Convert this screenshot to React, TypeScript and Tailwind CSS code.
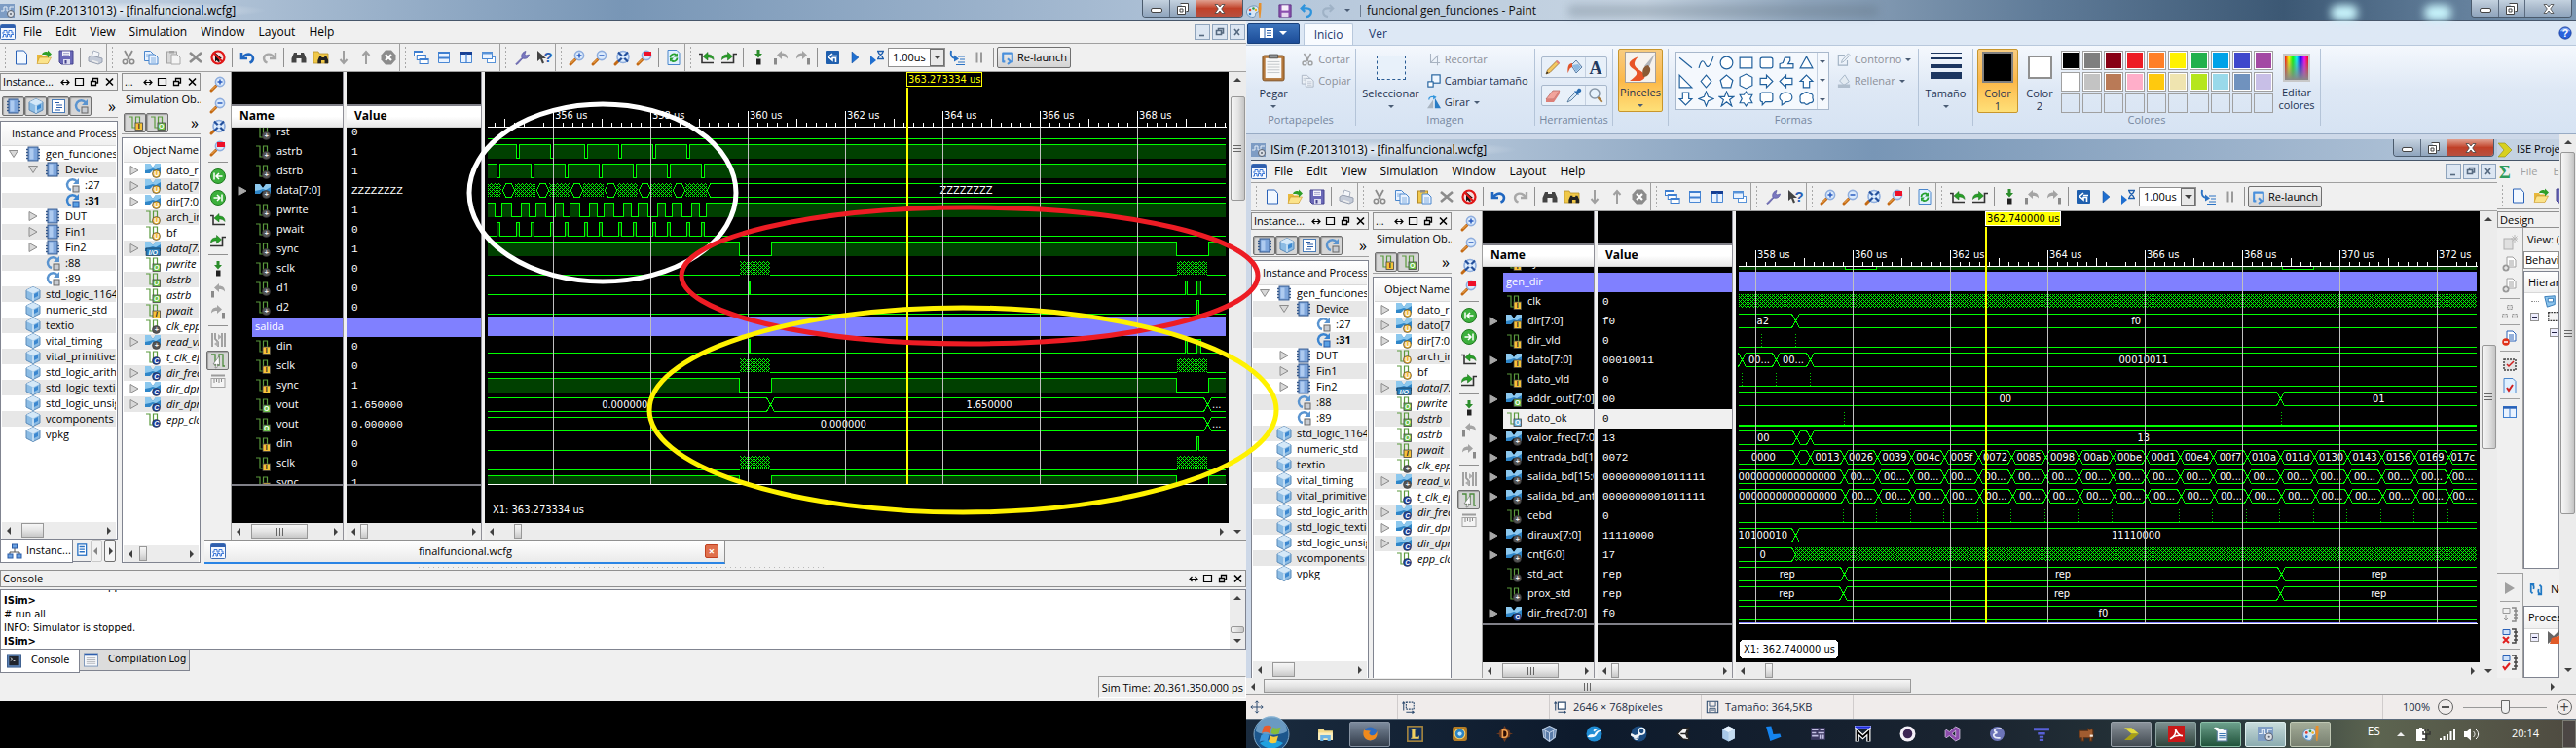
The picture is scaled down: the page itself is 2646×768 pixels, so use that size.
import React from "react";

/* ------------------------------------------------------------------ */
/* Icons, all drawn on a 16 x 16 grid                                  */
/* ------------------------------------------------------------------ */

const lens = (
  <>
    <path d="M1 15l5-5" stroke="#c46a14" strokeWidth="3" strokeLinecap="round" />
    <path d="M1.5 14l4-4" stroke="#f2b25c" strokeWidth="1" />
    <circle cx="10" cy="6" r="4.6" fill="#dcebfc" stroke="#8faede" strokeWidth="1.6" />
  </>
);
const bus = (
  <>
    <path d="M0 1h5l3 4 3-4h5v10h-5l-3-3-3 3H0z" fill="#2f86c8" />
    <path d="M0 1h5l3 4 3-4h5v3l-5 3-3-1-3 1-5 1z" fill="#8cc8ee" />
  </>
);
const sig = <path d="M1 2h4v11h4M8.500 13V2h4v6" fill="none" stroke="#5a9a3c" strokeWidth="1.200" />;
const badge = (c: string, t: string, round = false, fg = "#222") => (
  <>
    {round ? (
      <circle cx="11.500" cy="11.500" r="4" fill={c} stroke="#333" strokeWidth=".6" />
    ) : (
      <rect x="8" y="8" width="7.500" height="7.500" fill={c} stroke="#444" strokeWidth=".8" />
    )}
    <text x="11.700" y="14.300" fontSize="7" fontWeight="bold" textAnchor="middle" fill={fg} fontFamily="Liberation Sans, sans-serif">
      {t}
    </text>
  </>
);
const U = badge("#f0b93c", "U", true, "#fff");
const I = badge("#f6c33a", "I");
const O = badge("#6cc04a", "O", false, "#fff");
const P = badge("#555", "+", true, "#eee");
const C = badge("#1c3f9a", "C", true, "#fff");
const doc = (x: number, y: number, c: string, f = "#fff") => (
  <path d={`M${x} ${y}h6l3 3v7h-9z`} fill={f} stroke={c} />
);
const binoc = (c: string) => (
  <path d="M3 3h3v2h4V3h3l2.500 6v4.500h-5V9h-5v4.500h-5V9z" fill={c} />
);

const ICONS: Record<string, React.ReactNode> = {
  wcfg: (
    <>
      <rect x=".5" y=".5" width="15" height="15" rx="1" fill="#f4f8ff" stroke="#3c6cb4" />
      <rect x="1" y="1" width="14" height="3" fill="#2f5fae" />
      <path d="M2 9h2V6.500h3V9h2V6.500h3V9h2M2 13h1.500v-2.500H6V13h1.500v-2.500H10V13h1.500v-2.500H14" fill="none" stroke="#3c78d8" />
    </>
  ),
  app: (
    <>
      <rect x="0" y="1" width="15" height="14" fill="#7d9cc4" />
      <path d="M1 8h3V4h3v4h3V4h4" fill="none" stroke="#e8f0fa" />
      <circle cx="11" cy="11" r="3.500" fill="#d8dde4" stroke="#596270" />
      <circle cx="11" cy="11" r="1" fill="#596270" />
    </>
  ),
  new: <path d="M2.500 1h8l3 3.500V15h-11z" fill="#f2f8ff" stroke="#2a62b8" />,
  open: (
    <>
      <path d="M1 5h5l1 1.500h6V14H1z" fill="#e8b83c" />
      <path d="M3.500 8h12L12 14.500H1z" fill="#fbe38a" stroke="#c8962a" strokeWidth=".6" />
      <path d="M6 5c1-3 4-3.500 6-2.500V.5l4 4-4 4V6C9.500 4.500 8 5 6 5z" fill="#2f9e28" />
    </>
  ),
  save: (
    <>
      <path d="M1 1h14v14H3l-2-2z" fill="#6a68b8" stroke="#44428e" />
      <rect x="4" y="1.500" width="8" height="5.500" fill="#f4f4fb" />
      <path d="M5 3.500h6M5 5.300h6" stroke="#9a9ac8" strokeWidth=".8" />
      <rect x="5" y="10" width="7" height="5" fill="#dcdcf0" />
      <rect x="6.500" y="11" width="2" height="3.500" fill="#44428e" />
    </>
  ),
  print: (
    <>
      <path d="M4 7L6 1l6 2-1 5z" fill="#f4f6fa" stroke="#aab2c0" />
      <path d="M1 8l3-2 11 3v4l-4 2L1 12z" fill="#c4cbd8" stroke="#98a0b0" />
      <path d="M5 11.500l6 2" stroke="#eee" strokeWidth="1.500" />
    </>
  ),
  cut: (
    <>
      <path d="M4 1l5 9M12 1L7 10" stroke="#8c8c8c" strokeWidth="1.800" />
      <circle cx="4.500" cy="12.500" r="2.200" fill="none" stroke="#8c8c8c" strokeWidth="1.600" />
      <circle cx="11.500" cy="12.500" r="2.200" fill="none" stroke="#8c8c8c" strokeWidth="1.600" />
    </>
  ),
  copy: (
    <>
      {doc(1.5, 1.5, "#4a86cc", "#e8f2ff")}
      {doc(6, 5, "#4a86cc", "#e8f2ff")}
      <path d="M8 9h5M8 11h5M8 13h5M3 5h3M3 7h3" stroke="#7aa8dc" strokeWidth=".9" />
    </>
  ),
  copyOff: (
    <>
      {doc(1.5, 1.5, "#98a4b4", "#eef2f7")}
      {doc(6, 5, "#98a4b4", "#eef2f7")}
      <path d="M8 9h5M8 11h5M8 13h5M3 5h3M3 7h3" stroke="#b4bcc8" strokeWidth=".9" />
    </>
  ),
  paste: (
    <>
      <rect x="1.500" y="2" width="10" height="12" fill="#d8d8d8" stroke="#a4a4a4" />
      <rect x="4" y="1" width="5" height="2.500" fill="#a4a4a4" />
      {doc(6, 5, "#a8a8a8", "#f4f4f4")}
    </>
  ),
  pasteOn: (
    <>
      <rect x="1.500" y="2" width="10" height="12" fill="#f2c94e" stroke="#b48a28" />
      <rect x="4" y="1" width="5" height="2.500" fill="#8a8a8a" />
      {doc(6, 5, "#4a86cc", "#e8f2ff")}
      <path d="M8 9h5M8 11h5M8 13h5" stroke="#7aa8dc" strokeWidth=".9" />
    </>
  ),
  del: <path d="M2 3l12 10M14 3L2 13" stroke="#8c8c8c" strokeWidth="2.600" />,
  stop: (
    <>
      <circle cx="8" cy="8" r="6.500" fill="#f6dcdc" stroke="#e01818" strokeWidth="2.200" />
      <path d="M5 3l7 6-3.500.3 1.500 3-1.500.7L6.500 11 5 12.500z" fill="#111" />
      <path d="M3.500 3.500l9 9" stroke="#e01818" strokeWidth="2" />
    </>
  ),
  undo: <path d="M2 3v6h6M3 8.500c2-3.500 6-5 9-3s2.500 6.500-1.500 8" fill="none" stroke="#1f66c0" strokeWidth="2.600" />,
  redo: <path d="M14 3v6H8M13 8.500c-2-3.500-6-5-9-3S1.500 12 5.500 13.500" fill="none" stroke="#a8a8a8" strokeWidth="2.400" />,
  binoc: binoc("#444"),
  findf: (
    <>
      <path d="M0 2h5l1 2h9v10H0z" fill="#f0c848" stroke="#b8922c" strokeWidth=".8" />
      <g transform="translate(4 4.500) scale(.72)">{binoc("#222")}</g>
    </>
  ),
  down: <path d="M8 1v12M4.500 10L8 14l3.500-4" fill="none" stroke="#a0a0a0" strokeWidth="2" />,
  up: <path d="M8 15V3M4.500 6L8 2l3.500 4" fill="none" stroke="#a0a0a0" strokeWidth="2" />,
  oct: (
    <>
      <path d="M5 .5h6l4.500 5v5l-4.500 5H5l-4.500-5v-5z" fill="#8c8c8c" />
      <path d="M5 5l6 6M11 5l-6 6" stroke="#fff" strokeWidth="2.200" />
    </>
  ),
  cascade: (
    <>
      {[0, 4, 8].map((d) => (
        <g key={d}>
          <rect x={0.5 + d * 0.7} y={1.5 + d} width="9" height="5" fill="#fff" stroke="#3f7fd0" />
          <rect x={0.5 + d * 0.7} y={1 + d} width="9" height="2" fill="#3f7fd0" />
        </g>
      ))}
    </>
  ),
  tileh: (
    <>
      <path d="M2.500 2.500h11v11h-11z" fill="#eaf3ff" stroke="#4a88d4" />
      <path d="M2 3h12M2 8.500h12" stroke="#3f7fd0" strokeWidth="2" />
    </>
  ),
  tilev: (
    <>
      <path d="M2.500 2.500h11v11h-11z" fill="#eaf3ff" stroke="#4a88d4" />
      <path d="M2 3.500h12" stroke="#163f94" strokeWidth="3" />
      <path d="M8 4v10" stroke="#3f7fd0" strokeWidth="1.200" />
    </>
  ),
  winup: (
    <>
      <rect x="6.500" y="7.500" width="8" height="6" fill="#fff" stroke="#5a94d8" />
      <rect x="1.500" y="2.500" width="10" height="7" fill="#eaf3ff" stroke="#4a88d4" />
      <path d="M1 3.500h11" stroke="#5a94d8" strokeWidth="2" />
    </>
  ),
  wrench: (
    <path d="M2 14.500l6-6c-1-3 .5-6 4-7l-1 3 1.500 1.500 3-1c-.5 3.500-3.500 5-6.500 4l-5.500 6c-1 .8-2.200.2-1.500-.5z" fill="#7a78c0" stroke="#55539c" strokeWidth=".7" />
  ),
  whats: (
    <>
      <path d="M1 1v11l3-2.500 2 5 2-1-2-4.500h4z" fill="#444" />
      <text x="12" y="13" fontSize="15" fontWeight="bold" textAnchor="middle" fill="#2a5fb4" fontFamily="Liberation Sans, sans-serif">?</text>
    </>
  ),
  zin: <>{lens}<path d="M7.500 6h5M10 3.500v5" stroke="#2a5cc0" strokeWidth="1.500" /></>,
  zout: <>{lens}<path d="M7.500 6h5" stroke="#2a5cc0" strokeWidth="1.500" /></>,
  zfit: (
    <>
      <path d="M1 15l4-4" stroke="#c46a14" strokeWidth="3" strokeLinecap="round" />
      <circle cx="9" cy="7.500" r="6" fill="#dcebfc" stroke="#8faede" strokeWidth="1.600" />
      <path d="M4 2.500l10 10M14 2.500l-10 10" stroke="#224f9c" strokeWidth="2.200" />
      <circle cx="9" cy="7.500" r="2" fill="#dcebfc" />
    </>
  ),
  zcur: <>{lens}<rect x="7" y="2" width="8" height="5" fill="#ee1028" /></>,
  refresh: (
    <>
      <path d="M2 .5h9l3 3V15.500H2z" fill="#dff0ff" stroke="#4a86cc" />
      <path d="M4.500 8a3.500 3.500 0 016-2.500M11.500 8.500a3.500 3.500 0 01-6 2.500" fill="none" stroke="#22a02c" strokeWidth="1.800" />
      <path d="M12 3.500v4H8zM4 12.500v-4h4z" fill="#22a02c" />
    </>
  ),
  prevg: (
    <>
      <path d="M0 4.500h3V13.500h12" fill="none" stroke="#333" strokeWidth="1.600" />
      <path d="M4 7l5-4.500V5c3 0 6 1 6 5.500-1.500-2-3.500-2.500-6-2.500v3z" fill="#28a028" stroke="#156615" strokeWidth=".5" />
    </>
  ),
  nextg: (
    <>
      <path d="M0 13.500h12.500V4.500H16" fill="none" stroke="#333" strokeWidth="1.600" />
      <path d="M11.500 7l-5-4.500V5c-3 0-6 1-6 5.500C2 8.500 4 8 6.500 8v3z" fill="#28a028" stroke="#156615" strokeWidth=".5" />
    </>
  ),
  mark: (
    <>
      <path d="M6.500 0h3v4H12L8 8.500 4 4h2.500z" fill="#2a8c2a" />
      <rect x="6" y="9.500" width="4.500" height="6" fill="#222" />
    </>
  ),
  markp: (
    <>
      <rect x="1" y="9" width="3" height="6.500" fill="#8a8a8a" />
      <path d="M4 5.500L9 1v2.500c4 0 6 2 6 6-1.500-2-3.500-2.500-6-2.500v3z" fill="#a4a4a4" />
    </>
  ),
  markn: (
    <>
      <rect x="12" y="9" width="3" height="6.500" fill="#8a8a8a" />
      <path d="M12 5.500L7 1v2.500c-4 0-6 2-6 6C2.500 7.500 4.500 7 7 7v3z" fill="#a4a4a4" />
    </>
  ),
  restart: (
    <>
      <rect x="1" y="1" width="14" height="14" rx="1" fill="#1f5fae" />
      <path d="M8 4L4 7.500 8 11V8.500h3.500V13M8 6.500h5" fill="none" stroke="#fff" strokeWidth="1.600" />
    </>
  ),
  play: <path d="M5 2l7 6-7 6z" fill="#1f6fd0" stroke="#0f4a9a" strokeWidth=".5" />,
  playt: (
    <>
      <path d="M1 6l6 5-6 5z" fill="#1f6fd0" />
      <path d="M8 1.500h7M8 9.500h7M9 2c0 3 5 4 5 7M14 2c0 3-5 4-5 7" fill="none" stroke="#1f5fae" strokeWidth="1.300" />
    </>
  ),
  step: (
    <>
      <path d="M2 1c-1 5 0 7 4 8" fill="none" stroke="#2a72c4" strokeWidth="2" />
      <path d="M5 5.500l5 4-5 3z" fill="#2a72c4" />
      <path d="M9 7h7M11 10h5M9 13h7M7 15.500h9" stroke="#2a72c4" strokeWidth="1.200" />
    </>
  ),
  pause: <path d="M5.500 2.500v11M10 2.500v11" stroke="#9a9a9a" strokeWidth="2" />,
  relaunch: (
    <path d="M5 13H2.500V3h11v10h-3M8 9.500L11.500 13 8 16" fill="none" stroke="#4a90dc" strokeWidth="2.400" strokeLinejoin="round" />
  ),
  first: (
    <>
      <circle cx="8" cy="8" r="7.500" fill="#3cb03c" stroke="#1f7a1f" />
      <path d="M4 4.500v7M12.500 8H6M9 5L6 8l3 3" fill="none" stroke="#fff" strokeWidth="1.500" />
    </>
  ),
  last: (
    <>
      <circle cx="8" cy="8" r="7.500" fill="#3cb03c" stroke="#1f7a1f" />
      <path d="M12 4.500v7M3.500 8H10M7 5l3 3-3 3" fill="none" stroke="#fff" strokeWidth="1.500" />
    </>
  ),
  swap: (
    <>
      <path d="M2 1v14M5 1v6l3 3v5M12 1v14M15 1v14" stroke="#9a9a9a" strokeWidth="1.800" fill="none" />
      <path d="M8 2l4 3-4 3zM8 9L4 12l4 3z" fill="#b0b0b0" />
    </>
  ),
  snap: (
    <>
      <path d="M1 2h4v11h4V2h4v12h2" fill="none" stroke="#4c8a3c" strokeWidth="1.300" />
      <path d="M9 4L3 12l3 .3L5 16l2-.5.500-3.500 2 1z" fill="#fff" stroke="#666" strokeWidth=".6" />
    </>
  ),
  ruler: (
    <>
      <path d="M1 1.500h14v2H1z" fill="#9c9c9c" />
      <rect x="1" y="5.500" width="14" height="9" fill="#f4f4f4" stroke="#a4a4a4" />
      <path d="M4 6v4M6.500 6v3M9 6v4M11.500 6v3" stroke="#8c8c8c" />
    </>
  ),
  chip: (
    <>
      <path d="M1 3.500h14M1 6.500h14M1 9.500h14M1 12.500h14" stroke="#34588c" strokeWidth="1.300" />
      <rect x="3" y="1" width="10" height="14" fill="#7ea6dc" stroke="#34588c" />
      <path d="M4.500 2.500h4v11h-4z" fill="#aecbf0" />
    </>
  ),
  cube: (
    <>
      <path d="M8 .5l7 3.500v8l-7 3.500L1 12V4z" fill="#8cbce4" stroke="#5a8ab8" />
      <path d="M8 .5l7 3.500-7 3.500L1 4z" fill="#d4e8f8" />
      <path d="M8 7.500V15" stroke="#f4faff" />
      <path d="M9 8l4-2v4l-4 2z" fill="#3c88d0" />
    </>
  ),
  list: (
    <>
      <rect x="1.500" y="1.500" width="13" height="13" fill="#fff" stroke="#4a7cb8" />
      <path d="M4 4.500h5M6 7h6M6 9.500h6M4 12h6" stroke="#2a5ca8" strokeWidth="1.100" />
    </>
  ),
  proc: (
    <>
      <path d="M13 4.500A5.500 5.500 0 107 13" fill="none" stroke="#5a94d0" strokeWidth="2.400" />
      <path d="M15 1v6H9z" fill="#5a94d0" />
      <rect x="9" y="9" width="6" height="6" fill="#c8ccd2" stroke="#666" />
    </>
  ),
  procB: (
    <>
      <path d="M13 4.500A5.500 5.500 0 107 13" fill="none" stroke="#3a84d0" strokeWidth="2.400" />
      <path d="M15 1v6H9z" fill="#3a84d0" />
      <rect x="9" y="9" width="6" height="6" fill="#5aa0e4" stroke="#2a5ca8" />
    </>
  ),
  tree: (
    <>
      <path d="M8 5v4M3 12V9h10v3" fill="none" stroke="#555" />
      <rect x="5.500" y="1" width="5" height="4" fill="#6aa0e0" stroke="#2a5ca8" />
      <rect x="1" y="11" width="5" height="4" fill="#6aa0e0" stroke="#2a5ca8" />
      <rect x="10" y="11" width="5" height="4" fill="#6aa0e0" stroke="#2a5ca8" />
    </>
  ),
  memory: (
    <>
      <rect x="1" y="1" width="10" height="13" fill="#fff" stroke="#2a72c4" strokeWidth="1.500" />
      <path d="M3 4h6M3 7h6M3 10h6" stroke="#2a72c4" strokeWidth="1.500" />
    </>
  ),
  console: (
    <>
      <rect x=".5" y="1" width="15" height="14" fill="#5b83b8" stroke="#3a5c8c" />
      <rect x="2.500" y="3" width="11" height="10" fill="#20242c" />
      <path d="M4 5l2 1.500L4 8M7 8h2" stroke="#fff" fill="none" strokeWidth=".8" />
    </>
  ),
  log: (
    <>
      <rect x=".5" y="1" width="15" height="14" fill="#f6f8fb" stroke="#7a94b8" />
      <rect x="1" y="1" width="14" height="2.500" fill="#2f5fae" />
      <path d="M3 6h10M3 8h10M3 10h10M3 12h10" stroke="#b0b4ba" />
    </>
  ),
  busU: <>{bus}{U}</>, busI: <>{bus}{I}</>, busO: <>{bus}{O}</>, busP: <>{bus}{P}</>, busC: <>{bus}{C}</>,
  busIO: (
    <>
      {bus}
      <rect x="1" y="8" width="14.500" height="7.500" fill="#2a7cb8" stroke="#123" strokeWidth=".6" />
      <text x="8.200" y="14.500" fontSize="7" fontWeight="bold" textAnchor="middle" fill="#fff" fontFamily="Liberation Sans, sans-serif">I/O</text>
    </>
  ),
  sigU: <>{sig}{U}</>, sigI: <>{sig}{I}</>, sigO: <>{sig}{O}</>, sigP: <>{sig}{P}</>, sigC: <>{sig}{C}</>,
  sigS: <>{sig}{badge("#6ab4dc", "O", false, "#fff")}</>,
  palette: (
    <>
      <path d="M7 3c4-.5 6 1.500 6 4.500 0 2-2 1.500-3 2.500s.5 4-3 4.500C3 14.500.5 12 .5 9S3 3.500 7 3z" fill="#d6e6f6" stroke="#6f94b8" />
      <circle cx="4" cy="7" r="1.300" fill="#e04030" /><circle cx="7.500" cy="5.500" r="1.300" fill="#30a040" />
      <circle cx="4" cy="11" r="1.300" fill="#2c7fd4" /><circle cx="10" cy="7" r="1.200" fill="#f0b020" />
      <path d="M13 0h2.500v6l-1 9h-1l-1-9z" fill="#e8902c" />
    </>
  ),
  qsave: (
    <>
      <path d="M1 1h14v14H1z" fill="#8a4fae" stroke="#5c2f80" />
      <rect x="4" y="1.500" width="8" height="6" fill="#f6f0fa" />
      <rect x="4" y="10" width="8" height="5" fill="#e4d6ee" />
    </>
  ),
  qundo: <path d="M6 1L2 5l4 4M2.500 5H8c4 0 6 2 5.500 5S11 14.500 8 15" fill="none" stroke="#2f94dc" strokeWidth="2.600" />,
  qredo: <path d="M10 1l4 4-4 4M13.500 5H8c-4 0-6 2-5.500 5S5 14.500 8 15" fill="none" stroke="#9fb2c6" strokeWidth="2.400" />,
  crop: <path d="M4 1v11h11M1 4h11v11M4 12l9-9" fill="none" stroke="#98a4b4" strokeWidth="1.200" />,
  resize: (
    <>
      <rect x="5.500" y="1" width="9.500" height="9.500" fill="#eef6ff" stroke="#1f5f9c" strokeWidth="1.300" />
      <rect x="1" y="9" width="6" height="6" fill="#fff" stroke="#1f5f9c" strokeWidth="1.300" />
    </>
  ),
  rotate: (
    <>
      <path d="M7 5v10H0z" fill="#a9b4c0" /><path d="M9 3v12h7z" fill="#2a7cc4" />
      <path d="M2 5c0-3 3-4 6-3" fill="none" stroke="#2f94dc" strokeWidth="1.500" /><path d="M7 0l4 2-4 3z" fill="#2f94dc" />
    </>
  ),
  pencil: (
    <>
      <path d="M1 15l1.500-4L12 1.500l2.500 2.500L5 13.500z" fill="#f4c860" stroke="#94692a" strokeWidth=".8" />
      <path d="M1 15l1-2.500 1.500 1.500z" fill="#222" /><path d="M11 2.500L12.500 1 15 3.500 13.500 5z" fill="#e08080" />
    </>
  ),
  fill: (
    <>
      <path d="M5 6l5-5 6 7-6 6z" fill="#dfe8f2" stroke="#5b7ea6" />
      <path d="M6 6l6-1 3 3-5 5z" fill="#8cb8e0" />
      <path d="M6 4C2 4 1 8 1.500 14c1.500-2 1-5 4.500-6z" fill="#e0542c" />
    </>
  ),
  letter: <text x="8" y="14.500" fontSize="18" fontWeight="bold" textAnchor="middle" fill="#1f3a5f" fontFamily="Liberation Serif, serif">A</text>,
  eraser: (
    <>
      <path d="M1 12l7-9h7l-6 9z" fill="#f2a49c" stroke="#b86a64" strokeWidth=".8" /><path d="M1 12h8v3H1zM9 12l6-9v3l-6 9z" fill="#dc7f78" />
    </>
  ),
  picker: (
    <>
      <path d="M1 15l2-4 6-6 2 2-6 6z" fill="#d4e6f6" stroke="#43698f" strokeWidth=".8" />
      <path d="M8 4l1-1 1 1 2-3c2-1 4 1 3 3l-3 2 1 1-1 1z" fill="#2a6cb0" />
    </>
  ),
  magn: (
    <>
      <circle cx="7" cy="6" r="5" fill="#e6f2fc" stroke="#8797a8" strokeWidth="1.500" /><path d="M10.500 10l4 5" stroke="#a87b3c" strokeWidth="2.400" />
    </>
  ),
  outline: (
    <>
      <path d="M9 3H1.500v12H12V9" fill="none" stroke="#8fa2b6" strokeWidth="1.300" /><path d="M5 12l1-3 7-8 2 2-7 7.500z" fill="#e8eef4" stroke="#8fa2b6" />
    </>
  ),
  pour: (
    <>
      <path d="M3 8l6-7 5 8-6 4z" fill="#e4ebf2" stroke="#8fa2b6" /><rect x="1" y="12" width="14" height="4" fill="#a5b4c4" />
    </>
  ),
  cross: <path d="M8 1v14M1 8h14M6 3l2-2 2 2M6 13l2 2 2-2M3 6L1 8l2 2M13 6l2 2-2 2" fill="none" stroke="#2c4a6e" strokeWidth="1.100" />,
  seldim: (
    <>
      <path d="M5 2.500h9v8H5z" fill="none" stroke="#2c4a6e" strokeWidth="1.300" strokeDasharray="2 1" />
      <path d="M2 12V2M.5 4L2 2l1.500 2M5 14h9M12 12.500l2 1.500-2 1.500" fill="none" stroke="#2c4a6e" strokeWidth="1.200" />
    </>
  ),
  imgdim: (
    <>
      <path d="M5 2.500h9v8H5z" fill="#fff" stroke="#2c4a6e" strokeWidth="1.300" />
      <path d="M2 12V2M.5 4L2 2l1.500 2M5 14h9M12 12.500l2 1.500-2 1.500" fill="none" stroke="#2c4a6e" strokeWidth="1.200" />
    </>
  ),
  disk: (
    <>
      <path d="M1.500 1.500h13v13h-13z" fill="none" stroke="#2c4a6e" strokeWidth="1.200" /><path d="M4.500 2v5h7V2M4.500 14V9.500h7V14M5.500 11.500h5" fill="none" stroke="#2c4a6e" />
    </>
  ),
  help: (
    <>
      <circle cx="8" cy="8" r="7" fill="#2a62dc" stroke="#173c9c" /><path d="M2 6a6.500 6.500 0 0112 0z" fill="#86acf4" />
      <text x="8" y="12.500" fontSize="12" fontWeight="bold" textAnchor="middle" fill="#fff" fontFamily="Liberation Sans, sans-serif">?</text>
    </>
  ),
  ise: <path d="M1 1h7l7 7-7 7H1l6-7z" fill="#d8d020" stroke="#8f8a10" strokeWidth=".6" />,
  sigma: <text x="8" y="15" fontSize="18" fontWeight="bold" textAnchor="middle" fill="#2f9c5c" fontFamily="Liberation Serif, serif">Σ</text>,
  gnew: <><rect x="2" y="4" width="9" height="11" fill="#e0e0e0" stroke="#b0b0b0" /><path d="M13 0v8M9 4h7M10.500 1.500l5 5M15.500 1.500l-5 5" stroke="#b8b8b8" /></>,
  gadd: <>{doc(5, 1, "#a0a0a0")}<path d="M7 5h5M7 7h5M7 9h5" stroke="#a0a0a0" /><circle cx="4" cy="12" r="3.500" fill="#999" /><path d="M2 12h4M4 10v4" stroke="#fff" /></>,
  gblk: <path d="M5.500 1.500h5v4h-5zM.5 10.500h5v4h-5zM10.500 10.500h5v4h-5z" fill="#ddd" stroke="#999" strokeDasharray="2 1" />,
  bstop: <>{doc(5, 1, "#2a62b8")}<path d="M7 5h5M7 7h5M7 9h5" stroke="#2a62b8" /><circle cx="4" cy="12" r="3.800" fill="#e03018" /><path d="M2 12h4" stroke="#fff" strokeWidth="1.500" /></>,
  chk: <><rect x="2" y="3" width="12" height="11" fill="#e4e4e4" stroke="#444" strokeWidth="1.500" strokeDasharray="2 1" /><path d="M5 8l2 2 5-5" fill="none" stroke="#d02020" strokeWidth="1.500" /></>,
  dchk: <><path d="M2 .5h9l3 3V15.500H2z" fill="#dff0ff" stroke="#4a86cc" /><path d="M5 10l2 3 4-6" fill="none" stroke="#d02020" strokeWidth="2" /></>,
  cols: <><rect x="1.500" y="2.500" width="13" height="11" fill="#eaf3ff" stroke="#3f7fd0" /><path d="M1 3.500h14" stroke="#2a62b8" strokeWidth="2.400" /><path d="M8 4v9" stroke="#3f7fd0" /></>,
  gplay: <path d="M3 2l10 6-10 6z" fill="#a0a0a0" />,
  run1: <><path d="M1 1.500h7v5H1zM4 8v6M2 12l2 2 2-2" fill="none" stroke="#999" /><path d="M10 1h4v14h-4M12 4h4M12 8h4M12 12h4" fill="none" stroke="#888" strokeWidth="1.500" /></>,
  runx: <><path d="M1 1.500h7v5H1z" fill="#cfe2fa" stroke="#2a62b8" /><path d="M1 9l6 6M7 9l-6 6" stroke="#e02020" strokeWidth="2" /><path d="M10 1h4v14h-4M12 4h4M12 8h4M12 12h4" fill="none" stroke="#444" strokeWidth="1.500" /></>,
  runv: <><path d="M1 1.500h7v5H1z" fill="#cfe2fa" stroke="#2a62b8" /><path d="M1 12l2 3 5-6" fill="none" stroke="#e02020" strokeWidth="2" /><path d="M10 1h4v14h-4M12 4h4M12 8h4M12 12h4" fill="none" stroke="#444" strokeWidth="1.500" /></>,
  cycle: <path d="M6 2H2v9l2 2M3 2c2 1 3 3 2 6M10 14h4V5l-2-2M13 14c-2-1-3-3-2-6" fill="none" stroke="#1f78c4" strokeWidth="2" />,
  folder: <><path d="M2 3l12-1v10L5 15z" fill="#8cc4ec" stroke="#2a72b4" /><path d="M6 5h6v4H6z" fill="#fff" stroke="#2a72b4" /></>,
  ic: <><rect x="2" y="3" width="12" height="10" fill="#f4f4f4" stroke="#333" strokeWidth="1.500" strokeDasharray="2 1" /></>,
  tools: <><path d="M1 2l6 5 6-6 2 3-14 11z" fill="#666" /><path d="M5 9l11-3v9H3z" fill="#e05a28" /></>,
};

function Ico({ n, s = "size-4" }: { n: string; s?: string }) {
  return (
    <svg viewBox="0 0 16 16" className={`${s} block shrink-0 overflow-visible`} aria-hidden="true">
      {ICONS[n]}
    </svg>
  );
}

/* ------------------------------------------------------------------ */
/* Small shared parts                                                  */
/* ------------------------------------------------------------------ */

const UI = "font-['Open_Sans','Noto_Sans',sans-serif]";
const TAHOMA = "font-['DejaVu_Sans_Condensed','DejaVu_Sans',sans-serif]";

function Arrow({ d }: { d: "l" | "r" | "u" | "d" }) {
  const p = { l: "M5 0v8L1 4z", r: "M3 0v8l4-4z", u: "M0 6h8L4 2z", d: "M0 2h8L4 6z" }[d];
  return (
    <svg viewBox="0 0 8 8" className="size-2 shrink-0" aria-hidden="true">
      <path d={p} fill="#404040" />
    </svg>
  );
}

function HScroll({ lead, thumb, grip = false }: { lead: string; thumb: string; grip?: boolean }) {
  return (
    <div className="flex h-[17px] shrink-0 items-center bg-[#ececec] px-1">
      <Arrow d="l" />
      <div className={`${lead} shrink-0`} />
      <div className={`${thumb} flex h-[15px] shrink-0 items-center justify-center gap-0.5 border border-[#989898] bg-linear-to-b from-[#f6f6f6] via-[#e4e4e4] to-[#c8c8c8]`}>
        {grip && (
          <>
            <i className="h-2 w-px bg-[#666]" />
            <i className="h-2 w-px bg-[#666]" />
            <i className="h-2 w-px bg-[#666]" />
          </>
        )}
      </div>
      <div className="grow" />
      <Arrow d="r" />
    </div>
  );
}

function VScroll({ lead, thumb, w = "w-[18px]" }: { lead: string; thumb: string; w?: string }) {
  return (
    <div className={`${w} flex shrink-0 flex-col items-center bg-[#ececec] py-1 px-px`}>
      <Arrow d="u" />
      <div className={`${lead} shrink-0`} />
      <div className={`${thumb} flex w-[15px] shrink-0 flex-col items-center justify-center gap-0.5 rounded-xs border border-[#989898] bg-linear-to-r from-[#f6f6f6] via-[#e4e4e4] to-[#c4c4c4]`}>
        <i className="h-px w-2 bg-[#666]" />
        <i className="h-px w-2 bg-[#666]" />
        <i className="h-px w-2 bg-[#666]" />
      </div>
      <div className="grow" />
      <Arrow d="d" />
    </div>
  );
}

function DockHeader({ title }: { title: string }) {
  return (
    <div className="flex h-[18px] shrink-0 items-center border border-[#909090] bg-[#f0f0f0] pl-0.5 pr-0.5 leading-4">
      <span className="grow">{title}</span>
      <svg viewBox="0 0 56 10" className="h-[10px] w-14 shrink-0" aria-hidden="true">
        <g fill="none" stroke="#000">
          <path d="M1 5.500h8M3.500 3L1 5.500 3.500 8M6.500 3L9 5.500 6.500 8" strokeWidth="1.200" />
          <path d="M15.500 1.500h8v7h-8zM15 1.500h9" strokeWidth="1.200" />
          <path d="M33.500 4V1.500h5V6H36M31.500 4.500h5v4h-5z" strokeWidth="1.300" />
          <path d="M47 1.500l7 7M54 1.500l-7 7" strokeWidth="1.600" />
        </g>
      </svg>
    </div>
  );
}

function Toggle({ n }: { n: string }) {
  return (
    <button aria-label={n} className="flex h-5 w-[23px] shrink-0 items-center justify-center rounded-xs border border-[#707070] bg-[#d6d6d6] shadow-[inset_1px_1px_1px_#a0a0a0]">
      <Ico n={n} />
    </button>
  );
}

function Tri({ open = false, dark = false }: { open?: boolean; dark?: boolean }) {
  return (
    <svg viewBox="0 0 10 10" className="size-[10px]" aria-hidden="true">
      <path d={open ? "M.5 1.500h9l-4.500 7z" : "M1 .5v9l8-4.500z"} fill={dark ? "#a8a8a8" : "#d8d8d8"} stroke={dark ? "#a8a8a8" : "#8c8c8c"} />
    </svg>
  );
}

/* ------------------------------------------------------------------ */
/* Waveforms                                                           */
/* ------------------------------------------------------------------ */

type Seg = [number, number, string?];
type Wave =
  | { k: "bit"; lv: 0 | 1; e?: number[]; hatch?: [number, number][]; dots?: number[]; bold?: boolean }
  | { k: "bus"; segs: Seg[] }
  | { k: "div" };
type Signal = { name: string; icon?: string; exp?: boolean; value?: string; wave: Wave; sel?: boolean };

const X0 = 501;
const X1 = 1259;
const OFF = 492;
const G = "#00ff00";

const pulses = (start: number, count: number, w: number) =>
  Array.from({ length: count }, (_, i) => [start + i * 35, start + w + i * 35]).flat();
const merge = (...a: number[][]) => a.flat().sort((p, q) => p - q);
const chain = (cuts: number[], labels: string[]): Seg[] =>
  labels.map((l, i) => [cuts[i], cuts[i + 1], l] as Seg);

function WaveRow({ w, y, hatch }: { w: Wave; y: number; hatch: string }) {
  const hi = y + 3.5;
  const lo = y + 17.5;
  const mid = y + 10.5;
  if (w.k === "div") return <rect x={X0} y={y} width={X1 - X0} height="20" fill="#8080ff" />;
  if (w.k === "bus") {
    return (
      <>
        {w.segs.map(([a, b, label], i) => {
          if (label === "#") return <rect key={i} x={Math.max(a, X0)} y={y + 3} width={Math.min(b, X1) - Math.max(a, X0)} height="14" fill={hatch} />;
          const openL = a < X0;
          const openR = b >= X1;
          const l = openL ? X0 : a + 4;
          const r = openR ? X1 : b - 4;
          const d =
            (openL ? `M${l} ${hi}` : `M${a} ${mid}L${l} ${hi}`) +
            `H${r}` + (openR ? "" : `L${b} ${mid}`) +
            (openL ? `M${l} ${lo}` : `M${a} ${mid}L${l} ${lo}`) +
            `H${r}` + (openR ? "" : `L${b} ${mid}`);
          return (
            <g key={i}>
              <path d={d} fill="none" stroke={G} />
              {label && (
                <text x={(a + b) / 2} y={y + 14} textAnchor="middle" fill="#fff" fontSize="11">
                  {label}
                </text>
              )}
            </g>
          );
        })}
      </>
    );
  }
  let lv: number = w.lv;
  let x = X0;
  let d = `M${X0} ${lv ? hi : lo}`;
  const fills: [number, number][] = [];
  for (const e of w.e ?? []) {
    if (lv) fills.push([x, e]);
    lv = 1 - lv;
    d += `H${e}V${lv ? hi : lo}`;
    x = e;
  }
  if (lv) fills.push([x, X1]);
  d += `H${X1}`;
  return (
    <>
      {fills.map(([a, b], i) => (
        <rect key={i} x={a} y={y + 4} width={b - a} height="14" fill="#004000" />
      ))}
      <path d={d} fill="none" stroke={G} strokeWidth={w.bold ? 2 : 1} />
      {w.hatch?.map(([a, b], i) => (
        <g key={i}>
          <rect x={a} y={y + 3} width={b - a} height="15" fill="#000" />
          <rect x={a} y={y + 3} width={b - a} height="14" fill={hatch} />
        </g>
      ))}
      {w.dots?.map((p, i) => (
        <path key={i} d={`M${p} ${y + 4}V${lo}`} stroke={G} strokeDasharray="1 2" opacity=".8" />
      ))}
    </>
  );
}

function WaveView({ id, rows, top, tick0, us0, cursor, cursorText, solid }: {
  id: string; rows: Signal[]; top: number; tick0: number; us0: number; cursor: number; cursorText: string; solid?: boolean;
}) {
  const ticks: React.ReactNode[] = [];
  for (let x = tick0 - 100; x <= X1 + 1; x += 10) {
    if (x < X0) continue;
    const k = Math.round((x - tick0) / 10);
    const h = k % 10 === 0 ? 16 : k % 5 === 0 ? 8 : 4;
    ticks.push(<path key={x} d={`M${x + 0.5} ${130 - h}V130`} stroke="#fff" />);
  }
  const majors = Array.from({ length: 8 }, (_, i) => tick0 + i * 100).filter((x) => x < X1);
  return (
    <svg viewBox="498 74 764 463" preserveAspectRatio="xMinYMin slice" className={`${TAHOMA} block h-[463px] w-full bg-black`} shapeRendering="crispEdges" role="img" aria-label="Waveform">
      <defs>
        <pattern id={`${id}-hatch`} width="4" height="4" patternUnits="userSpaceOnUse">
          <path d="M0 0h1v1H0zM1 1h1v1H1zM3 1h1v1H3zM2 2h1v1H2zM1 3h1v1H1zM3 3h1v1H3z" fill={G} />
        </pattern>
        <clipPath id={`${id}-rows`}>
          <rect x="498" y="130" width="764" height="367" />
        </clipPath>
      </defs>
      <g clipPath={`url(#${id}-rows)`}>
        {rows.map((r, i) => (
          <WaveRow key={i} w={r.wave} y={top + i * 20} hatch={`url(#${id}-hatch)`} />
        ))}
        {solid && <rect x={X0} y="496" width={X1 - X0} height="1" fill="#8080ff" />}
      </g>
      {majors.map((x, i) => (
        <g key={x}>
          <path d={`M${x + 0.5} 131V497`} stroke="#c0c0c0" />
          <text x={x + 2} y="122" fontSize="11" fill="#fff">{us0 + i * 2} us</text>
        </g>
      ))}
      {ticks}
      <path d="M501 130.500H1260M501 497.500H1260" stroke="#fff" />
      <path d={`M${cursor} 90V497`} stroke="#ffff00" strokeWidth="2" />
      <rect x={cursor - 0.5} y="74.500" width="77" height="14" fill={solid ? "#ffff00" : "#000"} stroke={solid ? "#fff" : "#ffff00"} />
      <text x={cursor + 1} y="85" fontSize="11" fill={solid ? "#000" : "#ffff00"}>{cursorText}</text>
      {solid && <rect x="502" y="514" width="101" height="19" rx="4" fill="#fff" />}
      <text x="506" y="527" fontSize="11" fill={solid ? "#000" : "#fff"}>X1: {cursorText}</text>
    </svg>
  );
}

const sclk: Wave = { k: "bit", lv: 0, hatch: [[760, 791], [1209, 1240]] };
const sync: Wave = { k: "bit", lv: 1, e: [759.5, 792.5, 1208.5, 1241.5] };
const d1: Wave = { k: "bit", lv: 0, e: [769.5, 770.5, 1217.5, 1219.5, 1229.5, 1233.5] };
const d2: Wave = { k: "bit", lv: 0, e: [1229.5, 1231.5] };
const dataSegs: Seg[] = [
  [OFF, 515, "#"],
  ...Array.from({ length: 6 }, (_, i) => [
    [516 + i * 35, 529 + i * 35] as Seg,
    [529 + i * 35, (i === 5 ? 726 : 550 + i * 35), "#"] as Seg,
  ]).flat(),
  [726, X1, "ZZZZZZZZ"],
];

const ROWS_A: Signal[] = [
  { name: "rst", icon: "sigP", value: "0", wave: { k: "bit", lv: 0 } },
  { name: "astrb", icon: "sigP", value: "1", wave: { k: "bit", lv: 1, e: pulses(530.5, 6, 3) } },
  { name: "dstrb", icon: "sigP", value: "1", wave: { k: "bit", lv: 1, e: pulses(510.5, 7, 3) } },
  { name: "data[7:0]", icon: "busP", exp: true, value: "ZZZZZZZZ", wave: { k: "bus", segs: dataSegs } },
  { name: "pwrite", icon: "sigP", value: "1", wave: { k: "bit", lv: 1, e: merge(pulses(508.5, 7, 7), pulses(525.5, 6, 10)) } },
  { name: "pwait", icon: "sigP", value: "0", wave: { k: "bit", lv: 0, e: merge(pulses(510.5, 7, 3), pulses(530.5, 6, 3)) } },
  { name: "sync", icon: "sigP", value: "1", wave: sync },
  { name: "sclk", icon: "sigP", value: "0", wave: sclk },
  { name: "d1", icon: "sigP", value: "0", wave: d1 },
  { name: "d2", icon: "sigP", value: "0", wave: d2 },
  { name: "salida", wave: { k: "div" } },
  { name: "din", icon: "sigI", value: "0", wave: d1 },
  { name: "sclk", icon: "sigI", value: "0", wave: sclk },
  { name: "sync", icon: "sigI", value: "1", wave: sync },
  { name: "vout", icon: "sigO", value: "1.650000", wave: { k: "bus", segs: [[OFF, 791.5, "0.000000"], [791.5, 1240.5, "1.650000"], [1240.5, X1, "..."]] } },
  { name: "vout", icon: "sigO", value: "0.000000", wave: { k: "bus", segs: [[OFF, 1240.5, "0.000000"], [1240.5, X1, "..."]] } },
  { name: "din", icon: "sigI", value: "0", wave: d2 },
  { name: "sclk", icon: "sigI", value: "0", wave: sclk },
  { name: "sync", icon: "sigI", value: "1", wave: sync },
];

const STEP = 34.48;
const cutsAt = (s: number) => [...Array.from({ length: 19 }, (_, i) => Math.round(s + i * STEP) + 0.5), X1];
const dotsList = Array.from({ length: 19 }, (_, i) => Math.round(608 + i * STEP) + 0.5);
const words = "0026 0039 004c 005f 0072 0085 0098 00ab 00be 00d1 00e4 00f7 010a 011d 0130 0143 0156 0169 017c".split(" ");
const dd = words.map(() => "00...");

const ROWS_B: Signal[] = [
  { name: "sync", icon: "sigI", value: "", wave: { k: "bit", lv: 1, e: [610.5, 642.5, 1059.5, 1091.5] } },
  { name: "gen_dir", wave: { k: "div" } },
  { name: "clk", icon: "sigI", value: "0", wave: { k: "bit", lv: 0, hatch: [[X0, X1]] } },
  { name: "dir[7:0]", icon: "busI", exp: true, value: "f0", wave: { k: "bus", segs: [[OFF, 559.5, "a2"], [559.5, X1, "f0"]] } },
  { name: "dir_vld", icon: "sigI", value: "0", wave: { k: "bit", lv: 0, dots: [524.5, 559.5] } },
  { name: "dato[7:0]", icon: "busI", exp: true, value: "00010011", wave: { k: "bus", segs: [[OFF, 504.5], [504.5, 539.5, "00..."], [539.5, 574.5, "00..."], [574.5, X1, "00010011"]] } },
  { name: "dato_vld", icon: "sigI", value: "0", wave: { k: "bit", lv: 0, dots: [504.5, 539.5, 574.5] } },
  { name: "addr_out[7:0]", icon: "busO", exp: true, value: "00", wave: { k: "bus", segs: [[OFF, 1057.5, "00"], [1057.5, X1, "01"]] } },
  { name: "dato_ok", icon: "sigS", value: "0", sel: true, wave: { k: "bit", lv: 0, bold: true, dots: [609.5, 1058.5] } },
  { name: "valor_frec[7:0]", icon: "busP", exp: true, value: "13", wave: { k: "bus", segs: [[OFF, 560.5, "00"], [560.5, 574.5], [574.5, X1, "13"]] } },
  { name: "entrada_bd[15:0]", icon: "busP", exp: true, value: "0072", wave: { k: "bus", segs: [[OFF, 560.5, "0000"], [560.5, 574.5], [574.5, 609.5, "0013"], ...chain(cutsAt(609), words)] } },
  { name: "salida_bd[15:0]", icon: "busP", exp: true, value: "0000000001011111", wave: { k: "bus", segs: [[OFF, 609.5, "0000000000000000"], ...chain(cutsAt(609), dd)] } },
  { name: "salida_bd_ant", icon: "busP", exp: true, value: "0000000001011111", wave: { k: "bus", segs: [[OFF, 610.5, "0000000000000000"], ...chain(cutsAt(610), dd)] } },
  { name: "cebd", icon: "sigP", value: "0", wave: { k: "bit", lv: 0, dots: dotsList } },
  { name: "diraux[7:0]", icon: "busP", exp: true, value: "11110000", wave: { k: "bus", segs: [[OFF, 559.5, "10100010"], [559.5, X1, "11110000"]] } },
  { name: "cnt[6:0]", icon: "busP", exp: true, value: "17", wave: { k: "bus", segs: [[OFF, 559.5, "0"], [559, X1, "#"]] } },
  { name: "std_act", icon: "sigP", value: "rep", wave: { k: "bus", segs: [[OFF, 609.5, "rep"], [609.5, 1058.5, "rep"], [1058.5, X1, "rep"]] } },
  { name: "prox_std", icon: "sigP", value: "rep", wave: { k: "bus", segs: [[OFF, 608.5, "rep"], [608.5, 1057.5, "rep"], [1057.5, X1, "rep"]] } },
  { name: "dir_frec[7:0]", icon: "busC", exp: true, value: "f0", wave: { k: "bus", segs: [[OFF, X1, "f0"]] } },
];

/* ------------------------------------------------------------------ */
/* Simulator window                                                    */
/* ------------------------------------------------------------------ */

const INSTANCES: [number, string, string, ("o" | "c")?][] = [
  [0, "chip", "gen_funciones", "o"], [1, "chip", "Device", "o"], [2, "proc", ":27"], [2, "procB", ":31"],
  [1, "chip", "DUT", "c"], [1, "chip", "Fin1", "c"], [1, "chip", "Fin2", "c"], [1, "proc", ":88"], [1, "proc", ":89"],
  [0, "cube", "std_logic_1164"], [0, "cube", "numeric_std"], [0, "cube", "textio"], [0, "cube", "vital_timing"],
  [0, "cube", "vital_primitives"], [0, "cube", "std_logic_arith"], [0, "cube", "std_logic_textio"],
  [0, "cube", "std_logic_unsigned"], [0, "cube", "vcomponents"], [0, "cube", "vpkg"],
];
const INDENT = ["pl-[7px]", "pl-[27px]", "pl-[47px]"];

const OBJECTS: [string, string, boolean, boolean][] = [
  ["busU", "dato_r", true, false], ["busU", "dato[7:0]", true, false], ["busU", "dir[7:0]", true, false],
  ["sigU", "arch_in", false, false], ["sigU", "bf", false, false], ["busIO", "data[7:0]", true, true],
  ["sigO", "pwrite", false, true], ["sigO", "dstrb", false, true], ["sigO", "astrb", false, true],
  ["sigI", "pwait", false, true], ["sigP", "clk_epp", false, true], ["busP", "read_vld", true, true],
  ["sigC", "t_clk_epp", false, true], ["busC", "dir_frec", true, true], ["busC", "dir_dpr", true, true],
  ["busC", "dir_dpr", true, true], ["sigC", "epp_clock", false, true],
];

const TOOLBAR: string[][] = [
  ["new", "open", "save", "|", "print"],
  ["cut", "copy", "paste", "del", "stop", "|", "undo", "redo", "|", "binoc", "findf", "down", "up", "oct"],
  ["cascade", "tileh", "tilev", "winup"],
  ["wrench", "whats"],
  ["zin", "zout", "zfit", "zcur", "|", "refresh"],
  ["prevg", "nextg", "|", "mark", "markp", "markn", "|", "restart", "play", "playt", "=", "step", "pause", "|", "!"],
];

function Grip() {
  return <i className="mr-[3px] ml-1 h-6 w-[3px] shrink-0 bg-[radial-gradient(circle,#a8a8a8_1px,transparent_1px)] bg-size-[3px_4px]" />;
}

function Tool({ n }: { n: string }) {
  return (
    <button aria-label={n} className="flex h-6 w-[23px] shrink-0 items-center justify-center">
      <Ico n={n} />
    </button>
  );
}

function Toolbar({ id, pasteOn }: { id: string; pasteOn?: boolean }) {
  return (
    <div className="flex h-[30px] shrink-0 items-stretch border-y border-[#a0a0a0] bg-[#f0f0f0]">
      {TOOLBAR.map((sec, i) => (
        <div key={i} className={`flex items-center ${i < 5 ? "border-r border-[#a0a0a0]" : ""}`}>
          <Grip />
          {sec.map((n, j) => {
            if (n === "|") return <i key={j} className="mx-[3px] h-5 w-px bg-[#909090]" />;
            if (n === "=")
              return (
                <div key={j} className="relative flex h-5 items-stretch border border-[#909090] bg-white">
                  <label htmlFor={`${id}-t`} className="sr-only">Run time</label>
                  <select id={`${id}-t`} className={`${UI} w-[57px] appearance-none bg-white pl-1 text-[11px] leading-4 outline-none`}>
                    <option>1.00us</option>
                  </select>
                  <span className="pointer-events-none absolute inset-y-0 right-0 flex w-[15px] items-center justify-center border border-[#707070] bg-[#e8e8e8]">
                    <Arrow d="d" />
                  </span>
                </div>
              );
            if (n === "!")
              return (
                <button key={j} className="flex h-[22px] items-center gap-[3px] rounded-xs border border-[#707070] bg-linear-to-b from-[#f2f2f2] to-[#d4d4d4] px-[3px] whitespace-nowrap">
                  <Ico n="relaunch" s="size-3.5" />
                  Re-launch
                </button>
              );
            return <Tool key={j} n={n === "paste" && pasteOn ? "pasteOn" : n} />;
          })}
        </div>
      ))}
    </div>
  );
}

function WinButtons({ red = true }: { red?: boolean }) {
  return (
    <div className="flex h-[18px] shrink-0 self-start overflow-hidden rounded-b-sm border border-t-0 border-[#4a5a6c]">
      <button aria-label="Minimize" className="flex w-7 items-center justify-center border-r border-[#5c6c80] bg-linear-to-b from-[#c4d2e0] via-[#a9b9cb] to-[#8fa5be]">
        <i className="mt-1 h-[5px] w-3 rounded-xs border border-[#444] bg-white" />
      </button>
      <button aria-label="Restore" className="flex w-[27px] items-center justify-center border-r border-[#5c6c80] bg-linear-to-b from-[#c4d2e0] via-[#a9b9cb] to-[#8fa5be]">
        <svg viewBox="0 0 12 12" className="size-3" aria-hidden="true">
          <path d="M3.500.5h8v8h-2M.5 3.500h8v8h-8zM3 6h3v3H3z" fill="#fff" stroke="#444" />
        </svg>
      </button>
      <button aria-label="Close" className={`flex w-[47px] items-center justify-center bg-linear-to-b ${red ? "from-[#e0a090] via-[#c04028] to-[#b85040]" : "from-[#c4d2e0] via-[#a9b9cb] to-[#8fa5be]"}`}>
        <svg viewBox="0 0 12 10" className="h-[10px] w-3" aria-hidden="true">
          <path d="M1 .5h3l2 2.500 2-2.500h3L7.700 5 11 9.500H8L6 7 4 9.500H1L4.300 5z" fill="#fff" stroke="#444" strokeWidth=".8" />
        </svg>
      </button>
    </div>
  );
}

function SignalTable({ rows, first, mode }: { rows: Signal[]; first: string; mode: "Name" | "Value" }) {
  return (
    <div className="h-[388px] overflow-hidden">
      <table className="w-full table-fixed border-collapse">
        <thead>
          <tr>
            <th className="h-[21px] border-b border-[#d0d0d0] bg-linear-to-b from-white via-white to-[#e8e8e8] p-0 pl-2 text-left text-xs leading-5 font-bold text-black">{mode}</th>
          </tr>
        </thead>
        <tbody>
          {rows.map((r, i) => {
            const div = r.wave.k === "div";
            const bg = div ? "bg-[#8080ff] text-white" : r.sel ? "bg-[#f0f0f0] text-black" : "text-white";
            return (
              <tr key={i}>
                <td className="p-0">
                  <div className={`flex flex-col justify-end overflow-hidden ${i === 0 ? first : "h-5"}`}>
                    {mode === "Name" ? (
                      <div className="flex h-5 shrink-0 items-center">
                        <span className="flex w-[21px] shrink-0 justify-center">{r.exp && <Tri dark />}</span>
                        <span className={`flex h-5 min-w-0 grow items-center overflow-hidden whitespace-nowrap ${bg}`}>
                          {r.icon ? <span className="flex w-[25px] shrink-0 pl-[3px]"><Ico n={r.icon} /></span> : <span className="w-[3px] shrink-0" />}
                          {r.name}
                        </span>
                      </div>
                    ) : (
                      <div className={`h-5 shrink-0 pl-[5px] font-['Liberation_Mono',monospace] text-[11px] leading-5 ${bg}`}>{r.value}</div>
                    )}
                  </div>
                </td>
              </tr>
            );
          })}
        </tbody>
      </table>
    </div>
  );
}

function Pane({ w, children, scroll }: { w: string; children: React.ReactNode; scroll: React.ReactNode }) {
  return (
    <div className={`${w} mr-[3px] flex shrink-0 flex-col border-r border-[#909098]`}>
      <div className="h-[33px] shrink-0 bg-black" />
      <div className="h-0.5 shrink-0 bg-[#808088]" />
      <div className="bg-black">{children}</div>
      <div className="h-0.5 shrink-0 bg-[#808088]" />
      <div className="h-[38px] shrink-0 bg-black" />
      {scroll}
    </div>
  );
}

const SIDE = ["zin", "zout", "zfit", "zcur", "|", "first", "last", "prevg", "nextg", "|", "mark", "markp", "markn", "|", "swap", "*snap", "ruler"];

function ISim({ variant }: { variant: "a" | "b" }) {
  const a = variant === "a";
  const rows = a ? ROWS_A : ROWS_B;
  const first = a ? "h-[15px]" : "h-[6px]";
  return (
    <section className={`${UI} flex min-w-0 flex-col bg-[#f0f0f0] text-[11px] text-black`}>
      <header className="flex h-[22px] shrink-0 items-center border-b border-[#47566a] bg-linear-to-r from-[#cfdbe8] via-[#7896b6] to-[#b4c6da] pr-[3px]">
        <Ico n="app" />
        <h1 className="ml-1 grow text-xs">
          <span className="bg-[radial-gradient(closest-side,rgba(255,255,255,.7),transparent)] pr-8">ISim (P.20131013) - [finalfuncional.wcfg]</span>
        </h1>
        <WinButtons />
      </header>
      <nav className="flex h-[22px] shrink-0 items-center">
        <Ico n="wcfg" />
        <div className="ml-2 flex grow gap-[14px] text-xs">
          {["File", "Edit", "View", "Simulation", "Window", "Layout", "Help"].map((m) => (
            <button key={m}>{m}</button>
          ))}
        </div>
        <div className="flex gap-0.5 pr-px">
          {["M4 10.500h5", "M5.500 5V3.500h5V8H9M3.500 5.500h5v4h-5z", "M4 4l5 6M9 4l-5 6"].map((d) => (
            <button key={d} aria-label="Child window" className="border border-[#8fa4bc] bg-[#dce6f2]">
              <svg viewBox="0 0 14 14" className="size-[14px]" aria-hidden="true"><path d={d} fill="none" stroke="#566a80" strokeWidth="1.600" /></svg>
            </button>
          ))}
        </div>
      </nav>
      <Toolbar id={variant} pasteOn={!a} />

      <div className="flex h-[504px] shrink-0">
        {/* Instances */}
        <div className="mr-1 flex w-[121px] shrink-0 flex-col pt-px">
          <DockHeader title="Instance..." />
          <div className="mt-1 flex h-6 shrink-0 items-center border-b border-[#a0a0a0] pl-0.5">
            {["chip", "cube", "list", "proc"].map((n) => <Toggle key={n} n={n} />)}
            <span className="grow pr-0.5 text-right text-base leading-4">»</span>
          </div>
          <div className="mt-[3px] flex min-h-0 grow flex-col overflow-hidden border border-[#808490] bg-white px-px">
            <div className="h-[25px] shrink-0 overflow-hidden border-b border-[#d8d8d8] bg-linear-to-b from-white to-[#f0f0f0] pl-[10px] leading-6 whitespace-nowrap">Instance and Process Name</div>
            <ul className="min-h-0 grow overflow-hidden">
              {INSTANCES.map(([lv, icon, text, tri], i) => (
                <li key={i} className={`flex h-4 items-center overflow-hidden whitespace-nowrap ${INDENT[lv]} ${i % 2 ? "bg-[#e7e7e7]" : ""} ${text === ":31" ? "font-bold" : ""}`}>
                  <span className="flex w-[17px] shrink-0">{tri && <Tri open={tri === "o"} />}</span>
                  <Ico n={icon} />
                  <span className="ml-[5px]">{text}</span>
                </li>
              ))}
            </ul>
            <HScroll lead="w-2" thumb="w-[23px]" />
          </div>
          <div className="flex h-6 shrink-0 items-start">
            <button className="flex h-6 w-[75px] shrink-0 items-center gap-1 border border-t-0 border-[#808490] bg-white pl-1.5"><Ico n="tree" />Instanc...</button>
            <span className="flex h-[23px] items-center border-b border-[#808490] pl-1"><Ico n="memory" s="size-3.5" /></span>
            <button aria-label="Scroll left" className="flex h-[23px] w-3 items-center justify-center rounded-xs border border-[#b0b0b0] bg-[#f4f4f4] opacity-60"><Arrow d="l" /></button>
            <button aria-label="Scroll right" className="ml-0.5 flex h-[23px] w-3 items-center justify-center rounded-xs border border-[#707070] bg-[#f4f4f4]"><Arrow d="r" /></button>
          </div>
        </div>

        {/* Objects */}
        <div className="mr-1 flex w-[81px] shrink-0 flex-col pt-px">
          <DockHeader title="..." />
          <p className="h-[18px] shrink-0 overflow-hidden pl-1 leading-[18px] whitespace-nowrap">Simulation Ob...</p>
          <div className="mt-[3px] flex h-6 shrink-0 items-center border-b border-[#a0a0a0] pl-0.5">
            <Toggle n="sigI" />
            <Toggle n="sigO" />
            <span className="grow pr-0.5 text-right text-base leading-4">»</span>
          </div>
          <div className="mt-[3px] flex min-h-0 grow flex-col overflow-hidden border border-[#808490] bg-white px-px">
            <div className="h-[25px] shrink-0 overflow-hidden border-b border-[#d8d8d8] bg-linear-to-b from-white to-[#f0f0f0] pl-[10px] leading-6 whitespace-nowrap">Object Name</div>
            <ul className="min-h-0 grow overflow-hidden">
              {OBJECTS.map(([icon, text, tri, it], i) => (
                <li key={i} className={`flex h-4 items-center overflow-hidden pl-1.5 whitespace-nowrap ${i % 2 ? "bg-[#e7e7e7]" : ""} ${it ? "italic" : ""}`}>
                  <span className="flex w-4 shrink-0">{tri && <Tri />}</span>
                  <Ico n={icon} />
                  <span className="ml-1.5">{text}</span>
                </li>
              ))}
            </ul>
            <HScroll lead="w-1" thumb="w-2" />
          </div>
        </div>

        {/* Wave window */}
        <div className="flex min-w-0 grow flex-col">
          <div className="flex h-[480px] shrink-0">
            <div className="flex w-7 shrink-0 flex-col items-center border-r border-[#a0a0a0] pt-px">
              {SIDE.map((n, i) => {
                if (n === "|") return <i key={i} className="my-[3px] h-px w-5 shrink-0 bg-[#909090]" />;
                if (n[0] === "*") return <Toggle key={i} n={n.slice(1)} />;
                return <span key={i} className="flex h-[22px] shrink-0 items-center"><Tool n={n} /></span>;
              })}
            </div>
            <Pane w="w-[115px]" scroll={<HScroll lead="w-2" thumb="w-[58px]" grip />}>
              <SignalTable rows={rows} first={first} mode="Name" />
            </Pane>
            <Pane w="w-[139px]" scroll={<HScroll lead="w-0.5" thumb="w-2" />}>
              <SignalTable rows={rows} first={first} mode="Value" />
            </Pane>
            <div className="min-w-0 grow">
              {a ? (
                <WaveView id="wa" rows={rows} top={125} tick0={568} us0={356} cursor={932} cursorText="363.273334 us" />
              ) : (
                <WaveView id="wb" rows={rows} top={116} tick0={518} us0={358} cursor={755} cursorText="362.740000 us" solid />
              )}
              <HScroll lead="w-[18px]" thumb="w-2" />
            </div>
            <VScroll lead={a ? "h-[13px]" : "h-[125px]"} thumb="h-[107px]" />
          </div>
          <div className="flex h-6 shrink-0 border-t border-[#909090]">
            <button className="flex h-6 w-[535px] items-center border-r border-b-2 border-r-[#909090] border-b-[#2a84e4] bg-linear-to-b from-white to-[#eaeaea] px-1.5">
              <Ico n="wcfg" />
              <span className="grow text-center">finalfuncional.wcfg</span>
              <span className="flex size-[14px] items-center justify-center rounded-xs border border-[#c04020] bg-[#e0704c] text-[11px] font-bold text-white">×</span>
            </button>
          </div>
        </div>
      </div>

      {a && (
        <>
          <div className="flex h-[7px] items-center justify-center"><i className="h-0.5 w-[424px] bg-[radial-gradient(circle,#b8b8b8_1px,transparent_1px)] bg-size-[5px_3px]" /></div>
          <DockHeader title="Console" />
          <div className={`${TAHOMA} mt-0.5 flex h-[62px] border border-[#808490] bg-white text-[11px] leading-[14px]`}>
            <div className="flex grow flex-col justify-end overflow-hidden pl-[3px]">
              <p>INFO: Simulator is stopped.</p>
              <p className="font-bold">ISim&gt;</p>
              <p># run all</p>
              <p>INFO: Simulator is stopped.</p>
              <p className="font-bold">ISim&gt;</p>
            </div>
            <div className="flex w-4 flex-col items-center justify-between bg-[#ececec] py-1">
              <Arrow d="u" />
              <i className="mt-5 h-[7px] w-[14px] rounded-xs border border-[#989898] bg-linear-to-r from-[#f6f6f6] to-[#c8c8c8]" />
              <Arrow d="d" />
            </div>
          </div>
          <div className={`${TAHOMA} flex items-start text-[11px]`}>
            <button className="flex h-6 w-[82px] items-center gap-2.5 border border-t-0 border-[#808490] bg-white pl-1.5"><Ico n="console" s="size-[15px]" />Console</button>
            <button className="flex h-[22px] w-[113px] items-center gap-2.5 border border-t-0 border-l-0 border-[#808490] bg-[#dcdcdc] pl-1 whitespace-nowrap"><Ico n="log" s="size-[15px]" />Compilation Log</button>
          </div>
          <footer className="flex h-[29px] items-start justify-end pt-[3px]">
            <p className="h-[23px] border border-[#a0a0a0] border-r-white border-b-white pr-0.5 pl-[3px] leading-[22px]">Sim Time: 20,361,350,000 ps</p>
          </footer>
        </>
      )}
    </section>
  );
}

/* ------------------------------------------------------------------ */
/* Project navigator strip at the right of the canvas                  */
/* ------------------------------------------------------------------ */

function Navigator() {
  const grp = (items: string[]) =>
    items.map((n, i) =>
      n === "|" ? <i key={i} className="my-0.5 h-px w-5 shrink-0 bg-[#a0a0a0]" /> : <span key={i} className="flex h-[22px] shrink-0 items-center"><Ico n={n} /></span>
    );
  return (
    <section className={`${UI} flex w-16 shrink-0 flex-col overflow-hidden bg-[#f0f0f0] text-[11px] whitespace-nowrap`}>
      <header className="flex h-[22px] shrink-0 items-center gap-1 border-b border-[#47566a] bg-[#c4d2e2]"><Ico n="ise" />ISE Project</header>
      <nav className="flex h-[22px] shrink-0 items-center text-[#a0a0a0]"><Ico n="sigma" /><button className="ml-2">File</button><button className="ml-4">Edit</button></nav>
      <div className="flex h-[28px] shrink-0 items-center border-b border-[#a0a0a0]"><Grip /><Tool n="new" /><Tool n="open" /><Tool n="save" /></div>
      <div className="mt-0.5 h-[17px] shrink-0 border border-r-0 border-[#909090] pl-0.5 leading-4">Design</div>
      <div className="flex h-[350px] shrink-0">
        <div className="flex w-[27px] shrink-0 flex-col items-center border-r border-[#a0a0a0] pt-1">{grp(["gnew", "gadd", "gadd", "|", "gblk", "|", "bstop", "|", "chk", "dchk", "|", "cols"])}</div>
        <div className="flex min-w-0 grow flex-col overflow-hidden">
          <p className="h-5 shrink-0 pt-0.5 pl-1 leading-5">View: (</p>
          <p className="mt-1 h-[18px] shrink-0 overflow-hidden border border-[#909090] bg-white pl-px leading-4">Behavioral</p>
          <div className="mt-0.5 grow overflow-hidden border border-[#808490] bg-white">
            <p className="h-[22px] border-b border-[#d8d8d8] bg-linear-to-b from-white to-[#f0f0f0] pl-1 leading-[22px]">Hierarchy</p>
            <div className="flex h-4 items-center justify-end pr-0.5"><i className="mr-1 w-2 border-t border-dotted border-[#909090]" /><Ico n="folder" s="size-[14px]" /></div>
            <div className="flex h-4 items-center gap-2 pl-1.5"><i className="flex size-[9px] shrink-0 items-center border border-[#909090] bg-[#eef] px-px"><i className="h-px w-full bg-[#224]" /></i><Ico n="ic" s="size-[14px]" /></div>
            <div className="flex h-4 items-center pl-[26px]"><i className="flex size-[9px] shrink-0 items-center border border-[#909090] bg-[#eef] px-px"><i className="h-px w-full bg-[#224]" /></i></div>
          </div>
        </div>
      </div>
      <div className="mt-1 flex min-h-0 grow">
        <div className="flex w-[27px] shrink-0 flex-col items-center border-t border-r border-[#a0a0a0] pt-1">{grp(["gplay", "|", "run1", "runx", "|", "runv"])}</div>
        <div className="flex min-w-0 grow flex-col overflow-hidden">
          <p className="flex h-[34px] shrink-0 items-center gap-2 pl-1.5"><Ico n="cycle" s="size-[14px]" />No</p>
          <div className="grow border border-[#808490] bg-white">
            <p className="h-[23px] border-b border-[#d8d8d8] bg-linear-to-b from-white to-[#f0f0f0] pl-1 leading-[22px]">Processes</p>
            <div className="flex items-center gap-2 pl-1.5"><i className="flex size-[9px] shrink-0 items-center border border-[#909090] bg-[#eef] px-px"><i className="h-px w-full bg-[#224]" /></i><Ico n="tools" /></div>
          </div>
        </div>
      </div>
    </section>
  );
}

/* ------------------------------------------------------------------ */
/* Paint window                                                        */
/* ------------------------------------------------------------------ */

const COLORS = [
  "bg-[#000000]", "bg-[#7f7f7f]", "bg-[#880015]", "bg-[#ed1c24]", "bg-[#ff7f27]", "bg-[#fff200]", "bg-[#22b14c]", "bg-[#00a2e8]", "bg-[#3f48cc]", "bg-[#a349a4]",
  "bg-[#ffffff]", "bg-[#c3c3c3]", "bg-[#b97a57]", "bg-[#ffaec9]", "bg-[#ffc90e]", "bg-[#efe4b0]", "bg-[#b5e61d]", "bg-[#99d9ea]", "bg-[#7092be]", "bg-[#c8bfe7]",
  "", "", "", "", "", "", "", "", "", "",
];

const SHAPES = [
  "M2 3l12 10", "M1 13c2-8 4-8 6-4s4 5 8-7", "M8 2a6 6 0 100 12A6 6 0 108 2z", "M2 3h12v10H2z", "M4 3h8q2 0 2 2v6q0 2-2 2H4q-2 0-2-2V5q0-2 2-2z", "M2 13V9l3-1 2-5h5v3l-2 3h5v4z", "M8 2l6 11H2z",
  "M2 2v12h12z", "M8 2l5 6-5 6-5-6z", "M8 2l6 5-2 7H4L2 7z", "M8 1l6 3v8l-6 3-6-3V4z", "M2 5h6V2l6 6-6 6v-3H2z", "M14 5H8V2L2 8l6 6v-3h6z", "M8 2l6 6h-3v6H5V8H2z",
  "M8 14l6-6h-3V2H5v6H2z", "M8 1l2 5 5 2-5 2-2 5-2-5-5-2 5-2z", "M8 1l2 5h5l-4 3 2 6-5-4-5 4 2-6-4-3h5z", "M8 1l2 3h4l-2 4 2 4h-4l-2 3-2-3H2l2-4-2-4h4z", "M4 2h8q2 0 2 2v5q0 2-2 2H7l-3 3v-3q-2 0-2-2V4q0-2 2-2z", "M8 2c8 0 8 9 0 9l-4 3v-4C0 7 2 2 8 2z", "M5 3q3-3 6 0 4 0 3 4 2 5-3 5-3 3-5 0-5 1-4-4-1-4 3-5z",
];

function Caret() {
  return <i className="block h-0 w-0 border-x-[3px] border-t-[3px] border-x-transparent border-t-[#4a5c74]" />;
}

function Group({ caption, w, children }: { caption?: string; w: string; children: React.ReactNode }) {
  return (
    <div className={`${w} flex shrink-0 flex-col border-r border-[#b4c4d8]`}>
      <div className="flex h-[72px] justify-center whitespace-nowrap">{children}</div>
      <p className="text-center leading-3 text-[#76879f]">{caption}</p>
    </div>
  );
}

function SmallBtn({ n, text, dim, caret }: { n: string; text: string; dim?: boolean; caret?: boolean }) {
  return (
    <button className={`flex h-[22px] items-center gap-1 ${dim ? "text-[#8c9099]" : "text-[#1e3250]"}`}>
      <Ico n={n} s={dim ? "size-[14px] opacity-80" : "size-[14px]"} />
      {text}
      {caret && <Caret />}
    </button>
  );
}

function Ribbon() {
  return (
    <div className="flex h-[92px] shrink-0 border-y border-t-[#b8c8dc] border-b-[#98abc4] bg-linear-to-b from-[#f4f8fd] via-[#dee8f5] to-[#d6e3f3] pt-[3px] pb-2 text-[11px]">
      <Group caption="Portapapeles" w="w-[113px]">
        <button className="flex w-12 flex-col items-center pt-1 text-[#1e3250]">
          <svg viewBox="0 0 26 32" className="h-[30px] w-6" aria-hidden="true">
            <rect x="1" y="3" width="24" height="28" rx="2" fill="#b4783c" stroke="#7a4c1c" />
            <rect x="4" y="6" width="18" height="22" fill="#f8f8f8" />
            <path d="M8 2h10v4H8z" fill="#909498" stroke="#555" />
            <path d="M6 10h14M6 13h14M6 16h14M6 19h14M6 22h14" stroke="#c0c4c8" />
          </svg>
          <span className="mt-1 leading-4">Pegar</span>
          <span className="mt-1"><Caret /></span>
        </button>
        <div className="ml-1 flex flex-col">
          <SmallBtn n="cut" text="Cortar" dim />
          <SmallBtn n="copyOff" text="Copiar" dim />
        </div>
      </Group>
      <Group caption="Imagen" w="w-[184px]">
        <button className="flex flex-col items-center pt-[7px] text-[#1e3250]">
          <i className="h-[25px] w-[30px] shrink-0 border border-dashed border-[#2a5c94] bg-[#e8f1fa]" />
          <span className="mt-1.5 leading-4">Seleccionar</span>
          <span className="mt-1"><Caret /></span>
        </button>
        <div className="ml-2 flex flex-col">
          <SmallBtn n="crop" text="Recortar" dim />
          <SmallBtn n="resize" text="Cambiar tamaño" />
          <SmallBtn n="rotate" text="Girar" caret />
        </div>
      </Group>
      <Group caption="Herramientas" w="w-20">
        <div className="flex flex-col gap-[7px] pt-2">
          {[["pencil", "fill", "letter"], ["eraser", "picker", "magn"]].map((r) => (
            <div key={r[0]} className="flex h-[22px] rounded-xs border border-[#a8b8cc] bg-[#e8f0f9]">
              {r.map((n, i) => (
                <button key={n} aria-label={n} className={`flex w-[22px] items-center justify-center ${i ? "border-l border-[#c4d0e0]" : ""}`}><Ico n={n} /></button>
              ))}
            </div>
          ))}
        </div>
      </Group>
      <Group w="w-[57px]">
        <button className="flex h-[65px] w-[46px] flex-col items-center rounded-xs border border-[#c8962c] bg-linear-to-b from-[#f8cc80] via-[#fcb848] to-[#fee078] pt-0.5 text-[#1e3250]">
          <svg viewBox="0 0 32 32" className="size-8 shrink-0" aria-hidden="true">
            <rect x=".5" y=".5" width="31" height="31" fill="#f6f2ee" stroke="#a8a098" />
            <path d="M14 5C2 10 3 14 9 18s3 7-4 12h11c8-3 4-8-1-11S7 12 14 5z" fill="#e85428" />
            <path d="M31 2L20 15l4 3z" fill="#b0b4ba" />
            <path d="M24 14c-5 1-7 5-5 12 5 0 8-5 7-9z" fill="#8a5a34" />
          </svg>
          <span className="mt-0.5 leading-4">Pinceles</span>
          <span className="mt-1"><Caret /></span>
        </button>
      </Group>
      <Group caption="Formas" w="w-[257px]">
        <div className="mt-[3px] flex h-[60px] border border-[#a8b8cc] bg-[#f4f8fd]">
          <div className="grid w-[144px] grid-cols-7 justify-items-center pt-0.5">
            {SHAPES.map((d) => (
              <svg key={d} viewBox="0 0 16 16" className="size-[17px]" aria-hidden="true"><path d={d} fill="#fff" stroke="#1f5f9c" strokeWidth="1.100" /></svg>
            ))}
          </div>
          <div className="flex w-3 flex-col items-center justify-around border-l border-[#c4d0e0]"><Caret /><Caret /><Caret /></div>
        </div>
        <div className="ml-2 flex flex-col">
          <SmallBtn n="outline" text="Contorno" dim caret />
          <SmallBtn n="pour" text="Rellenar" dim caret />
        </div>
      </Group>
      <Group w="w-14">
        <button className="flex flex-col items-center pt-1 text-[#1e3250]">
          <svg viewBox="0 0 32 30" className="h-[30px] w-8 shrink-0" aria-hidden="true">
            <path d="M0 0h32v1H0zM0 5h32v2H0zM0 12h32v4H0zM0 20h32v7H0z" fill="#1c3660" />
          </svg>
          <span className="mt-1 leading-4">Tamaño</span>
          <span className="mt-1"><Caret /></span>
        </button>
      </Group>
      <Group caption="Colores" w="w-[357px]">
        <button className="flex h-[66px] w-[42px] flex-col items-center rounded-xs border border-[#c8962c] bg-linear-to-b from-[#f8cc80] via-[#fcb848] to-[#fee078] pt-0.5 leading-[13px] text-[#1e3250]">
          <i className="mb-1 size-8 shrink-0 border-2 border-[#808080] bg-black" />
          Color<br />1
        </button>
        <button className="ml-2 flex w-7 flex-col items-center pt-[7px] leading-[13px] text-[#1e3250]">
          <i className="mb-2 h-6 w-[25px] shrink-0 border-2 border-[#909090] bg-white" />
          Color<br />2
        </button>
        <div className="mt-0.5 ml-2 grid grid-cols-10 gap-0.5 self-start">
          {COLORS.map((c, i) => (
            <button key={i} aria-label={`Color ${i + 1}`} className={`size-5 border border-[#a0a0a0] ${c ? "bg-white p-px" : ""}`}>
              {c && <i className={`block size-full ${c}`} />}
            </button>
          ))}
        </div>
        <button className="ml-1 flex w-10 flex-col items-center pt-[5px] leading-[13px] text-[#1e3250]">
          <i className="mb-1 h-[29px] w-7 shrink-0 border-2 border-[#c8c8c8] bg-[linear-gradient(to_bottom,transparent,#888),linear-gradient(to_right,red,yellow,lime,aqua,blue,magenta,red)]" />
          Editar<br />colores
        </button>
      </Group>
    </div>
  );
}

const TASKS: { fg: React.ReactNode; on?: string }[] = [
  { fg: <><path d="M1 3h5l1 2h8v9H1z" fill="#f4dc8c" /><path d="M1 7h14v7H1z" fill="#fbeebc" /><path d="M3 15V9.500h10V15h-3v-2.500H6V15z" fill="#6cb4e4" /></> },
  { fg: <><circle cx="8" cy="8" r="6.500" fill="#2f6cc0" /><path d="M2 4c-2 5 0 10 6 10.500 5 0 7.500-4 6.500-9-1 3-3 5-6 4-2-1-2-3 0-4-3-1-5 0-6.500-1.500z" fill="#f08a1c" /></>, on: "bg-linear-to-b from-[#7c8a9c] to-[#343e4c] border-[#8894a4]" },
  { fg: <><rect x=".8" y=".8" width="14.400" height="14.400" fill="#12305c" stroke="#a8863c" strokeWidth="1.500" /><path d="M4 3h5v1H8v7h3l1-1.500V13H4v-1h1V4H4z" fill="#f0d060" /></> },
  { fg: <><rect x="1" y="1" width="14" height="14" rx="2" fill="#b47c24" /><circle cx="8" cy="8" r="5" fill="#2c84c4" stroke="#f0d070" /><circle cx="8" cy="8" r="2" fill="#bfe8fa" /></> },
  { fg: <><path d="M8 0l2 3.500L13 5v2l3 1-3 1v2l-3 1.500L8 16l-2-3.500L3 11V9L0 8l3-1V5l3-1.500z" fill="#6c3a20" /><path d="M6 4.500h2c3.500 0 3.500 7 0 7H6z" fill="#2c0c04" stroke="#f0a050" strokeWidth="1.500" /></> },
  { fg: <><path d="M8 .5l6.500 3-1 8L8 15.500l-5.500-4-1-8z" fill="#5a7ca8" stroke="#b8cce4" /><path d="M1.500 3.500L8 7l6.500-3.500M8 7v8M4 5v7M12 5v7" stroke="#d8e4f4" fill="none" strokeWidth=".8" /></> },
  { fg: <><circle cx="8" cy="8" r="7.500" fill="#1f8cd4" /><path d="M1.500 11c2-3 5-3 6.500-2 1-3 4-5 7-4-2 1-3 1-4 3-2 4-5 4-9.500 3zM7 5c1-2 3-2 4-1-1 0-2 1-2.500 2z" fill="#f4fafe" /></> },
  { fg: <><circle cx="8" cy="8" r="7.500" fill="#1c4c80" /><circle cx="10.500" cy="5.500" r="3" fill="none" stroke="#f0f4f8" strokeWidth="1.700" /><path d="M0 8.500l5 3 4.500-4" stroke="#f0f4f8" strokeWidth="2.500" fill="none" /><circle cx="5.500" cy="11.500" r="2" fill="none" stroke="#f0f4f8" /></> },
  { fg: <path d="M13 2L7 3 2 8l5 5 6 1-1.500-6zM5 8h5l1.500-4M10 8l1.500 4" fill="#f4f4f4" stroke="#222" strokeWidth="1.300" /> },
  { fg: <><path d="M8 .5l6 3v9l-6 3-6-3v-9z" fill="#a8c8e8" /><path d="M8 .5l6 3-6 3-6-3z" fill="#e8f2fc" /><path d="M8 6.500v9l6-3v-9z" fill="#c4dcf0" /></> },
  { fg: <path d="M1 1l5-.5 2 8 6.500-.5 1 3L5 15z" fill="#1484f0" /> },
  { fg: <><rect x="1" y="2" width="14" height="12" fill="#3c3860" /><path d="M2 4h6M10 4h4M2 7h4M8 7h6M2 10h6M10 9v4M13 9v4" stroke="#c4c0e4" strokeWidth="1.500" /></> },
  { fg: <><path d="M0 0h16v3H0z" fill="#1c2ce0" stroke="#fff" strokeWidth=".6" /><path d="M2.500 15.500V6L8 11l5.500-5v9.500" fill="none" stroke="#fff" strokeWidth="4" /><path d="M2.500 15V6L8 11l5.500-5v9" fill="none" stroke="#000" strokeWidth="1.700" /></> },
  { fg: <><circle cx="8" cy="8" r="7.500" fill="#f4f0f8" /><circle cx="8" cy="8" r="4.500" fill="#3c2454" /></> },
  { fg: <path d="M11 1l4 2v10l-4 2-6-5-3 2-1-1V5l1-1 3 2zM11 5L7.500 8l3.500 3z" fill="#8c4cac" stroke="#e4d4f0" strokeWidth=".7" fillRule="evenodd" /> },
  { fg: <><circle cx="8" cy="8" r="7" fill="#6c74b8" /><path d="M12 3c-8-1-8 3-4 4-6 1-4 6 3 5" fill="none" stroke="#e8ecf8" strokeWidth="1.600" /></> },
  { fg: <path d="M0 2h15v3H0zM4 6.500h7V9H4zM5.500 10h4v2h-4zM5.500 13h4v2h-4z" fill="#5860d8" /> },
  { fg: <><path d="M1 5h8V3l2 1 2-1 1 2v7h-1v3h-2v-3H5v3H3v-3H1z" fill="#a05c30" stroke="#5c3014" /><path d="M11 9h3v2h-3z" fill="#f4ece4" /></> },
  { fg: <><path d="M1 2h7l7 6H8z" fill="#e4dc3c" /><path d="M1 14h7l7-6H8z" fill="#a8a014" /></>, on: "bg-linear-to-b from-[#8a929a] to-[#434b52] border-[#9aa2aa]" },
  { fg: <><rect width="16" height="16" fill="#c81818" /><path d="M2 13c5-3 6-7 5-10 2 5 4 7 7 7-4-1-8 0-12 3z" fill="none" stroke="#fff" strokeWidth="1.500" /></>, on: "bg-linear-to-b from-[#7c9090] to-[#30443c] border-[#8ca4a0]" },
  { fg: <><path d="M4 4h10v11H4z" fill="#f4f8fc" stroke="#5a7ca0" /><path d="M1 2c3-1 5 0 6 2 2-1 3 0 4 1-3 1-7 2-10-3z" fill="#fff" /><path d="M6 8h6M6 10h6M6 12h6" stroke="#3c78b4" /></>, on: "bg-linear-to-b from-[#6ca08c] to-[#20543c] border-[#8cc0a8]" },
  { fg: ICONS.app, on: "bg-linear-to-b from-[#c8dcdc] to-[#8cacb0] border-[#dcecec]" },
  { fg: ICONS.palette, on: "bg-linear-to-b from-[#a4ac98] to-[#788070] border-[#c0c8b4]" },
];

function Taskbar() {
  return (
    <div className={`${UI} flex h-[30px] shrink-0 items-stretch border-t border-[#5c6c7c] bg-[linear-gradient(to_right,#1a2b3e,#0d1a2c_25%,#1a2430_55%,#2b3a3c_75%,#5c6450_85%,#4e4a40)] text-[11px] text-white`}>
      <button aria-label="Start" className="relative w-[58px] shrink-0">
        <svg viewBox="0 0 38 38" className="absolute -top-1 left-[7px] size-[38px]" aria-hidden="true">
          <circle cx="19" cy="19" r="18" fill="#1c568c" stroke="#7ca4c4" />
          <path d="M3 16a16 16 0 0132 0c-8 5-24 5-32 0z" fill="#8cb8d8" opacity=".7" />
          <path d="M7 28a16 16 0 0024 0c-6-4-18-4-24 0z" fill="#20b4f4" opacity=".8" />
          <path d="M11 11c3-2 6-1 8 0l-2 7c-3-2-6-1-8 0z" fill="#e85c2c" />
          <path d="M20.500 11.500c3 2 6 1 8 0l-2 7c-3 1-6 1-8-1z" fill="#84bc3c" />
          <path d="M8.500 20c3-2 6-1 8 0l-2 7c-3-2-6-1-8 0z" fill="#3c98dc" />
          <path d="M18 20.500c3 2 6 1 8 0l-2 7c-3 1-6 1-8-1z" fill="#f8cc3c" />
        </svg>
      </button>
      {TASKS.map((t, i) => (
        <button key={i} aria-label={`Task ${i + 1}`} className="flex w-[46px] shrink-0 items-center justify-center">
          <span className={`flex h-[26px] w-[42px] items-center justify-center rounded-xs ${t.on ? `border ${t.on}` : ""}`}>
            <svg viewBox="0 0 16 16" className="size-[17px]" aria-hidden="true">{t.fg}</svg>
          </span>
        </button>
      ))}
      <div className="flex grow items-center justify-end gap-[9px]">
        <span className="mr-2 pb-1.5 text-xs">ES</span>
        <svg viewBox="0 0 8 8" className="mr-0.5 size-2" aria-hidden="true"><path d="M0 6h8L4 2z" fill="#f0f0f0" /></svg>
        <svg viewBox="0 0 16 16" className="size-4" aria-hidden="true"><path d="M1 3h9v12H1zM4 1h3v2H4z" fill="#fff" /><path d="M8 5v3h7V5M10 2v3M13 2v3M11.500 8v5H7" stroke="#333" fill="none" strokeWidth="1.500" /></svg>
        <svg viewBox="0 0 16 12" className="h-3 w-4" aria-hidden="true"><path d="M0 10h2v2H0zM3.500 8h2v4h-2zM7 6h2v6H7zM10.500 3h2v9h-2zM14 0h2v12h-2z" fill="#fff" /></svg>
        <svg viewBox="0 0 16 14" className="h-[14px] w-4" aria-hidden="true"><path d="M0 4h3l4-3.500v13L3 10H0z" fill="#fff" /><path d="M9.500 4c2 2 2 4 0 6M12 2c3.500 3 3.500 7 0 10" fill="none" stroke="#fff" /></svg>
        <span className="mx-6">20:14</span>
      </div>
      <button aria-label="Show desktop" className="w-[14px] shrink-0 border border-[#7c7c74] bg-[#4c4644]" />
    </div>
  );
}

function Status({ n, text, w }: { n?: string; text?: string; w: string }) {
  return (
    <div className={`${w} flex shrink-0 items-center gap-1.5 border-r border-[#d0cccc] pl-1 whitespace-nowrap`}>
      {n && <Ico n={n} s="size-3.5" />}
      {text}
    </div>
  );
}

function Paint() {
  return (
    <section className={`${UI} flex h-screen min-w-0 grow basis-[1366px] flex-col text-xs`}>
      <header className="flex h-[22px] shrink-0 items-center border-b border-[#47566a] bg-[linear-gradient(to_right,#b4c6da,#c6d4e2_30%,#8fa5bc_42%,#5f7b98_60%,#3c5874_78%,#7c98b4)] pr-1">
        <Ico n="palette" />
        <i className="mx-2 h-3 w-px bg-[#6c7c90]" />
        <Ico n="qsave" s="size-3.5" />
        <i className="w-2" />
        <Ico n="qundo" s="size-3.5" />
        <i className="w-2" />
        <Ico n="qredo" s="size-3.5" />
        <i className="mx-2.5"><Caret /></i>
        <i className="mr-1.5 h-3 w-px bg-[#6c7c90]" />
        <h1 className="text-[#111]">funcional gen_funciones - Paint</h1>
        <div className="ml-8 h-3 w-80 rounded-full bg-[#5c6c7c]/30 blur-xs" />
        <div className="grow" />
        <i className="mr-[68px] h-4 w-7 self-end rounded-full bg-[#c8f4fc] blur-xs" />
        <i className="mr-5 h-4 w-7 self-end rounded-full bg-[#c8f4fc] blur-xs" />
        <WinButtons red={false} />
      </header>
      <nav className="flex h-6 shrink-0 items-end bg-[#dde8f5] pl-px text-[#1e3a6e]">
        <button aria-label="Menu" className="flex h-[21px] w-[54px] items-center justify-center gap-1.5 self-center rounded-t-xs border border-[#17407c] bg-linear-to-b from-[#3c74bc] to-[#1c4c98]">
          <svg viewBox="0 0 14 10" className="h-[10px] w-[14px]" aria-hidden="true"><path d="M0 0h14v10H0z" fill="#fff" /><path d="M5 0v10M7 2.500h5M7 5h5M7 7.500h5" stroke="#2c60a8" /></svg>
          <i className="border-x-4 border-t-4 border-x-transparent border-t-white" />
        </button>
        <button className="ml-1 h-[22px] w-[51px] rounded-t-xs border border-b-0 border-[#b8c8dc] bg-[#f8fbff]">Inicio</button>
        <button className="ml-4 h-[22px]">Ver</button>
        <div className="grow" />
        <button aria-label="Help" className="mr-1 self-center"><Ico n="help" s="size-[14px]" /></button>
      </nav>
      <Ribbon />

      <div className="flex min-h-0 grow bg-[#cdd8e8]">
        <div className="flex min-w-0 grow overflow-hidden pt-[5px] pl-[5px]">
          <div className="min-w-0 grow overflow-hidden"><ISim variant="b" /></div>
          <Navigator />
        </div>
        <VScroll lead="h-1.5" thumb="h-[372px]" w="w-[17px]" />
      </div>
      <div className="flex shrink-0 bg-[#ececec]">
        <div className="grow"><HScroll lead="w-1.5" thumb="w-[665px]" grip /></div>
        <div className="w-[17px]" />
      </div>
      <footer className="flex h-[25px] shrink-0 items-stretch border-t border-[#a0a0a0] bg-[#f0eceb] text-[11px] text-[#1c2c44]">
        <Status w="w-[156px]" n="cross" />
        <Status w="w-[156px]" n="seldim" />
        <Status w="w-[156px]" n="imgdim" text="2646 × 768píxeles" />
        <Status w="w-[156px]" n="disk" text="Tamaño: 364,5KB" />
        <div className="grow border-r border-[#d0cccc]" />
        <div className="flex items-center pr-1 pl-5">
          <label htmlFor="zoom">100%</label>
          <button aria-label="Zoom out" className="ml-2 flex size-4 items-center justify-center rounded-full border border-[#666]"><i className="h-0.5 w-2 bg-[#555]" /></button>
          <input
            id="zoom"
            type="range"
            defaultValue="70"
            className="mx-2.5 h-[14px] w-[86px] appearance-none bg-[linear-gradient(#999,#999)] bg-size-[100%_1px] bg-center bg-no-repeat [&::-webkit-slider-thumb]:h-[14px] [&::-webkit-slider-thumb]:w-[9px] [&::-webkit-slider-thumb]:appearance-none [&::-webkit-slider-thumb]:rounded-b-sm [&::-webkit-slider-thumb]:border [&::-webkit-slider-thumb]:border-[#666] [&::-webkit-slider-thumb]:bg-[#f0f0f0]"
            min="20"
            max="120"
          />
          <button aria-label="Zoom in" className="flex size-4 items-center justify-center rounded-full border border-[#666] text-base leading-3 text-[#444]">+</button>
        </div>
      </footer>
      <Taskbar />
    </section>
  );
}

export default function App() {
  return (
    <main className="relative flex min-h-screen items-stretch overflow-hidden bg-black">
      <div className="min-w-0 grow basis-[1280px]"><ISim variant="a" /></div>
      <Paint />
      <svg className="pointer-events-none absolute top-0 left-0 h-[540px] w-[1320px]" fill="none" strokeWidth="5" aria-hidden="true">
        <ellipse cx="619" cy="198" rx="137" ry="91" stroke="#fff" />
        <ellipse cx="996" cy="283" rx="296" ry="70" stroke="#ed1c24" />
        <ellipse cx="989" cy="421" rx="322" ry="105" stroke="#fff200" />
      </svg>
    </main>
  );
}
